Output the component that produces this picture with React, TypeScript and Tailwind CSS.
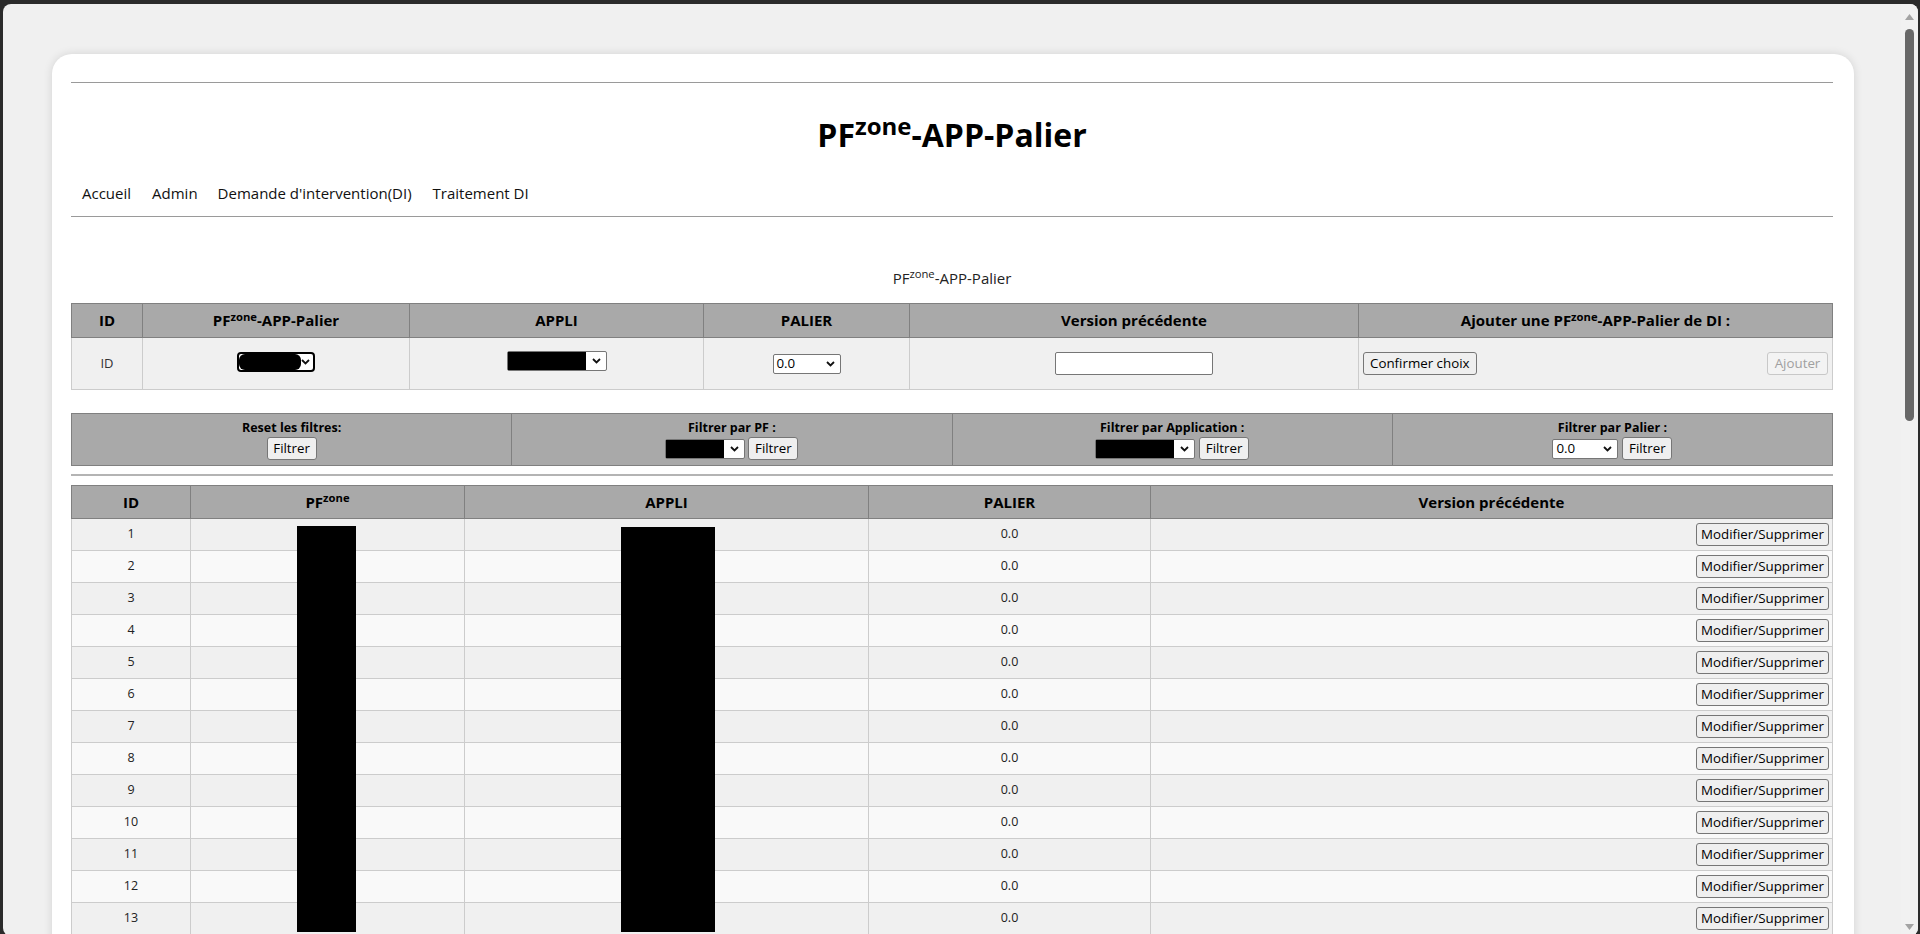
import React from 'react';

function Chevron() {
    return (
        <svg width="9" height="6" viewBox="0 0 9 6" className="shrink-0">
            <path d="M1 1l3.5 3.5L8 1" fill="none" stroke="#111" strokeWidth="1.8" />
        </svg>
    );
}

function Btn({ children, className = '' }: { children: React.ReactNode; className?: string }) {
    return (
        <button
            type="button"
            className={`inline-flex h-[23px] items-center justify-center whitespace-nowrap rounded-[3px] border border-[#767676] bg-[#efefef] px-[6px] text-[13.33px] leading-none text-black ${className}`}
        >
            {children}
        </button>
    );
}

// select noirci (contenu masqué)
function BlackSelect({ width }: { width: string }) {
    return (
        <div className={`inline-flex h-[20px] items-center rounded-[2px] border border-[#767676] bg-white pr-[5px] ${width}`}>
            <div className="h-full flex-1 bg-black" />
            <div className="ml-[6px]">
                <Chevron />
            </div>
        </div>
    );
}

function ValueSelect({ width }: { width: string }) {
    return (
        <div className={`inline-flex h-[20px] items-center justify-between rounded-[2px] border border-[#767676] bg-white pl-[3px] pr-[5px] text-[13.33px] text-black ${width}`}>
            <span>0.0</span>
            <Chevron />
        </div>
    );
}

function Zone() {
    return <sup>zone</sup>;
}

const rows = Array.from({ length: 13 }, (_, i) => i + 1);

export default function App() {
    return (
        <div className="h-[934px] w-[1920px] overflow-hidden bg-[#2b2b2b] pl-[3px] pr-[2px] pt-[4px] font-['Segoe_UI','Open_Sans',sans-serif] text-black">
            <div className="flex h-[932px] overflow-hidden rounded-[8px] bg-[#f0f0f0]">
                {/* page */}
                <div className="min-w-0 flex-1 pl-[49px] pr-[47px] pt-[50px]">
                    <div className="rounded-[20px] bg-white pb-[40px] pl-[19px] pr-[21px] pt-[28px] shadow-[0_0_10px_rgba(0,0,0,0.12)]">
                        <div className="border-t border-[#9a9a9a]" />

                        <h1 className="mt-[32px] text-center text-[32px] font-bold leading-[40px]">
                            PF<Zone />-APP-Palier
                        </h1>

                        {/* Navigation */}
                        <nav className="mt-[26px] flex h-[24px] items-center text-[15px] text-[#111]">
                            <a className="px-[11px]">Accueil</a>
                            <a className="px-[10px]">Admin</a>
                            <a className="px-[10px]">Demande d'intervention(DI)</a>
                            <a className="px-[11px]">Traitement DI</a>
                        </nav>
                        <div className="mt-[11px] border-t border-[#9a9a9a]" />

                        <p className="mt-[50px] text-center text-[15px] leading-[22px] text-[#222]">
                            PF<Zone />-APP-Palier
                        </p>

                        {/* Ajout */}
                        <table className="mt-[14px] w-full table-fixed border-collapse">
                            <thead>
                                <tr className="h-[34px] bg-[#a9a9a9] text-[15px] font-bold">
                                    <th className="w-[71px] border border-[#808080]">ID</th>
                                    <th className="w-[267px] border border-[#808080]">PF<Zone />-APP-Palier</th>
                                    <th className="w-[294px] border border-[#808080]">APPLI</th>
                                    <th className="w-[206px] border border-[#808080]">PALIER</th>
                                    <th className="w-[449px] border border-[#808080]">Version précédente</th>
                                    <th className="border border-[#808080]">Ajouter une PF<Zone />-APP-Palier de DI :</th>
                                </tr>
                            </thead>
                            <tbody>
                                <tr className="h-[52px] bg-[#f0f0f0] text-[13px]">
                                    <td className="border border-[#cccccc] text-center text-[#333]">ID</td>
                                    <td className="border border-[#cccccc] text-center">
                                        <div className="inline-flex h-[20px] w-[78px] items-center rounded-[4px] border-2 border-black bg-white pr-[3px]">
                                            <div className="h-full flex-1 rounded-[6px] bg-black" />
                                            <Chevron />
                                        </div>
                                    </td>
                                    <td className="border border-[#cccccc] text-center">
                                        <BlackSelect width="w-[100px]" />
                                    </td>
                                    <td className="border border-[#cccccc] text-center">
                                        <ValueSelect width="w-[68px]" />
                                    </td>
                                    <td className="border border-[#cccccc] text-center">
                                        <div className="inline-block h-[23px] w-[158px] rounded-[2px] border border-[#767676] bg-white align-middle" />
                                    </td>
                                    <td className="border border-[#cccccc] px-[4px]">
                                        <div className="flex items-center justify-between">
                                            <Btn className="px-[5px]">Confirmer choix</Btn>
                                            <button
                                                type="button"
                                                className="inline-flex h-[23px] w-[61px] items-center justify-center rounded-[3px] border border-[#c8c8c8] bg-[#f3f3f3] text-[13.33px] text-[#a0a0a0]"
                                            >
                                                Ajouter
                                            </button>
                                        </div>
                                    </td>
                                </tr>
                            </tbody>
                        </table>

                        {/* Filtres */}
                        <table className="mt-[23px] w-full table-fixed border-collapse">
                            <tbody>
                                <tr className="h-[52px] bg-[#a9a9a9] text-[12.5px] font-bold">
                                    <th className="border border-[#808080] align-top pt-[6px]">
                                        <div className="leading-[16px]">Reset les filtres:</div>
                                        <Btn className="mt-[1px] w-[50px] font-normal">Filtrer</Btn>
                                    </th>
                                    <th className="border border-[#808080] align-top pt-[6px]">
                                        <div className="leading-[16px]">Filtrer par PF :</div>
                                        <div className="mt-[1px] flex items-center justify-center gap-[3px] font-normal">
                                            <BlackSelect width="w-[80px]" />
                                            <Btn className="w-[50px]">Filtrer</Btn>
                                        </div>
                                    </th>
                                    <th className="border border-[#808080] align-top pt-[6px]">
                                        <div className="leading-[16px]">Filtrer par Application :</div>
                                        <div className="mt-[1px] flex items-center justify-center gap-[4px] font-normal">
                                            <BlackSelect width="w-[100px]" />
                                            <Btn className="w-[50px]">Filtrer</Btn>
                                        </div>
                                    </th>
                                    <th className="border border-[#808080] align-top pt-[6px]">
                                        <div className="leading-[16px]">Filtrer par Palier :</div>
                                        <div className="mt-[1px] flex items-center justify-center gap-[4px] font-normal">
                                            <ValueSelect width="w-[66px]" />
                                            <Btn className="w-[50px]">Filtrer</Btn>
                                        </div>
                                    </th>
                                </tr>
                            </tbody>
                        </table>

                        <div className="mt-[8px] border-t-2 border-[#b4b4b4]" />

                        {/* Liste */}
                        <div className="relative mt-[9px]">
                            <table className="w-full table-fixed border-collapse">
                                <thead>
                                    <tr className="h-[33px] bg-[#a9a9a9] text-[15px] font-bold">
                                        <th className="w-[119px] border border-[#808080]">ID</th>
                                        <th className="w-[274px] border border-[#808080] align-top pt-[5px]">PF<Zone /></th>
                                        <th className="w-[404px] border border-[#808080]">APPLI</th>
                                        <th className="w-[282px] border border-[#808080]">PALIER</th>
                                        <th className="border border-[#808080]">Version précédente</th>
                                    </tr>
                                </thead>
                                <tbody>
                                    {rows.map((n) => (
                                        <tr key={n} className={`h-[32px] text-[12.5px] ${n % 2 === 1 ? 'bg-[#f0f0f0]' : 'bg-[#f9f9f9]'}`}>
                                            <td className="border border-[#cccccc] text-center text-[#222]">{n}</td>
                                            <td className="border border-[#cccccc]" />
                                            <td className="border border-[#cccccc]" />
                                            <td className="border border-[#cccccc] text-center text-[#222]">0.0</td>
                                            <td className="border border-[#cccccc] pr-[3px] text-right">
                                                <Btn className="h-[22px] w-[133px]">Modifier/Supprimer</Btn>
                                            </td>
                                        </tr>
                                    ))}
                                </tbody>
                            </table>
                            {/* zones masquées */}
                            <div className="absolute left-[226px] top-[41px] h-[406px] w-[59px] bg-black" />
                            <div className="absolute left-[550px] top-[42px] h-[405px] w-[94px] bg-black" />
                        </div>
                    </div>
                </div>

                {/* scrollbar */}
                <div className="flex w-[17px] shrink-0 flex-col items-center bg-[#f1f1f1]">
                    <svg width="9" height="6" viewBox="0 0 9 6" className="mt-[10px]">
                        <path d="M0 6L4.5 0L9 6Z" fill="#a3a3a3" />
                    </svg>
                    <div className="mt-[9px] h-[392px] w-[9px] rounded-full bg-[#686868]" />
                    <div className="flex-1" />
                    <svg width="9" height="6" viewBox="0 0 9 6" className="mb-[6px]">
                        <path d="M0 0L4.5 6L9 0Z" fill="#a3a3a3" />
                    </svg>
                </div>
            </div>
        </div>
    );
}
